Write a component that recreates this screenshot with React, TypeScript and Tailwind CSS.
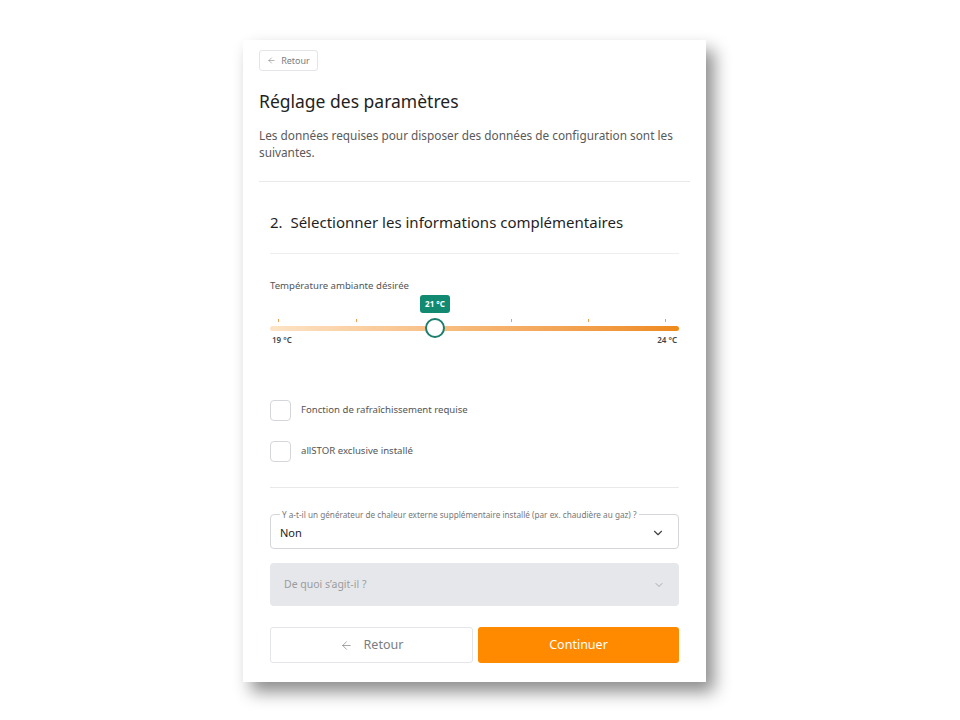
import { ArrowLeft, ChevronDown } from "lucide-react";

const ticks = [8, 86, 164, 241, 318, 395];

function TempSlider() {
  return (
    <div className="relative h-[52px] w-[409px]">
      {/* tooltip */}
      <div className="absolute left-[150px] top-0 flex h-[18px] w-[30px] items-center justify-center rounded-[3px] bg-[#128a72] text-[8px] font-bold text-white">
        21 °C
      </div>
      {ticks.map((x) => (
        <div key={x} className="absolute top-[24px] h-[3px] w-px bg-[#e9a050]" style={{ left: x }} />
      ))}
      <div className="absolute left-0 top-[31px] h-[5px] w-full rounded-full bg-gradient-to-r from-[#fde3c6] via-[#f6b673] to-[#ee8a1a]" />
      <div className="absolute left-[155px] top-[23px] h-[20px] w-[20px] rounded-full border-2 border-[#1c7f6d] bg-white" />
      <div className="absolute left-[2px] top-[39px] text-[8px] font-semibold text-[#444]">19 °C</div>
      <div className="absolute right-[2px] top-[39px] text-[8px] font-semibold text-[#444]">24 °C</div>
    </div>
  );
}

function Check({ label }: { label: string }) {
  return (
    <label className="flex items-center gap-[10px]">
      <span className="h-[21px] w-[21px] rounded-[4px] border border-[#d4d6da] bg-white" />
      <span className="text-[9.6px] text-[#555]">{label}</span>
    </label>
  );
}

export default function App() {
  return (
    <div className="min-h-[720px] bg-white pt-[40px] font-['Noto_Sans',sans-serif]">
      <div className="ml-[243px] w-[463px] bg-white px-4 pb-[19px] pt-[10px] shadow-[8px_10px_16px_rgba(0,0,0,0.45)]">
        <button className="flex h-[21px] w-[59px] items-center justify-center gap-[5px] rounded-[3px] border border-[#e3e5e8] text-[9px] text-[#7a7d82]">
          <ArrowLeft size={9} strokeWidth={1.5} />
          Retour
        </button>

        <h1 className="mt-[18px] text-[17.5px] leading-6 text-[#1f1f1f]">Réglage des paramètres</h1>
        <p className="mt-[14px] text-[11.8px] leading-[17px] text-[#5a5a5a]">
          Les données requises pour disposer des données de configuration sont les suivantes.
        </p>
        <div className="mt-[20px] h-px bg-[#e8e9eb]" />

        <div className="px-[11px]">
          <h2 className="mt-[29px] text-[15px] leading-[22px] text-[#1f1f1f]">
            2.&nbsp; Sélectionner les informations complémentaires
          </h2>
          <div className="mt-[20px] h-px bg-[#eceef0]" />

          <div className="mt-[25px] text-[9.6px] leading-[14px] text-[#555]">Température ambiante désirée</div>
          <div className="mt-[2px]">
            <TempSlider />
          </div>

          <div className="mt-[53px] flex flex-col gap-[20px]">
            <Check label="Fonction de rafraîchissement requise" />
            <Check label="allSTOR exclusive installé" />
          </div>

          <div className="mt-[25px] h-px bg-[#e8e9eb]" />

          <fieldset className="mt-[22px] h-[39px] rounded-[4px] border border-[#d4d6da] px-[9px]">
            <legend className="px-[2px] text-[8.2px] leading-[9px] text-[#777]">
              Y a-t-il un générateur de chaleur externe supplémentaire installé (par ex. chaudière au gaz) ?
            </legend>
            <div className="flex items-center justify-between pt-[6px]">
              <span className="text-[11px] text-[#222]">Non</span>
              <ChevronDown size={14} strokeWidth={2} className="mr-[4px] text-[#444]" />
            </div>
          </fieldset>

          <div className="mt-[14px] flex h-[43px] items-center justify-between rounded-[4px] bg-[#e6e7ea] px-[14px]">
            <span className="text-[10.5px] text-[#9a9ca0]">De quoi s’agit-il ?</span>
            <ChevronDown size={12} strokeWidth={2} className="text-[#a8aaae]" />
          </div>

          <div className="mt-[21px] flex gap-[5px]">
            <button className="flex h-[36px] flex-1 items-center justify-center gap-[11px] rounded-[3px] border border-[#e3e5e8] bg-white text-[12.5px] text-[#7a7d82]">
              <ArrowLeft size={13} strokeWidth={1.25} />
              Retour
            </button>
            <button className="flex h-[36px] flex-1 items-center justify-center rounded-[3px] bg-[#ff8a00] text-[12.5px] text-white">
              Continuer
            </button>
          </div>
        </div>
      </div>
    </div>
  );
}
